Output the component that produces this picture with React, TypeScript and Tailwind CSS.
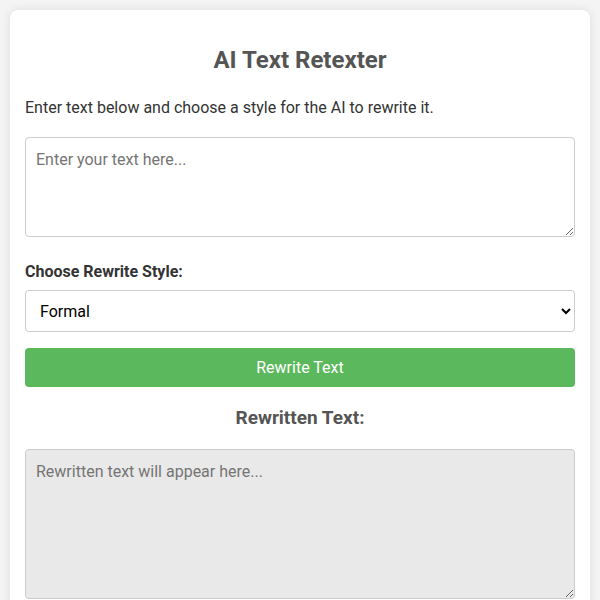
import React from "react";

export default function App() {
  return (
    <div className="min-h-screen bg-[#f4f4f4] p-[10px] font-['Roboto',sans-serif]">
      <div className="bg-white rounded-lg shadow-[0_0_10px_rgba(0,0,0,0.1)] px-[15px] pt-[36px] pb-[20px]">
        <h1 className="text-center text-[24px] leading-[29px] font-bold text-[#555]">AI Text Retexter</h1>
        <p className="mt-[21px] text-[16px] leading-[24px] text-[#333]">
          Enter text below and choose a style for the AI to rewrite it.
        </p>
        <textarea
          className="mt-[17px] block w-full h-[100px] border border-[#ccc] rounded-[4px] p-[10px] text-[16px] text-[#333] placeholder:text-[#757575] outline-none"
          placeholder="Enter your text here..."
        />
        <label className="block mt-[23px] text-[16px] leading-[24px] font-bold text-[#333]">Choose Rewrite Style:</label>
        <select className="mt-[6px] block w-full h-[42px] border border-[#ccc] rounded-[4px] px-[10px] text-[16px] text-black bg-white outline-none">
          <option>Formal</option>
          <option>Casual</option>
          <option>Creative</option>
        </select>
        <button className="mt-[16px] block w-full h-[39px] bg-[#5cb85c] text-white text-[16px] rounded-[4px]">
          Rewrite Text
        </button>
        <h2 className="mt-[19px] text-center text-[19px] leading-[24px] font-bold text-[#555]">Rewritten Text:</h2>
        <textarea
          readOnly
          className="mt-[19px] block w-full h-[150px] border border-[#ccc] rounded-[4px] p-[10px] text-[16px] bg-[#e9e9e9] placeholder:text-[#757575] outline-none"
          placeholder="Rewritten text will appear here..."
        />
      </div>
    </div>
  );
}
